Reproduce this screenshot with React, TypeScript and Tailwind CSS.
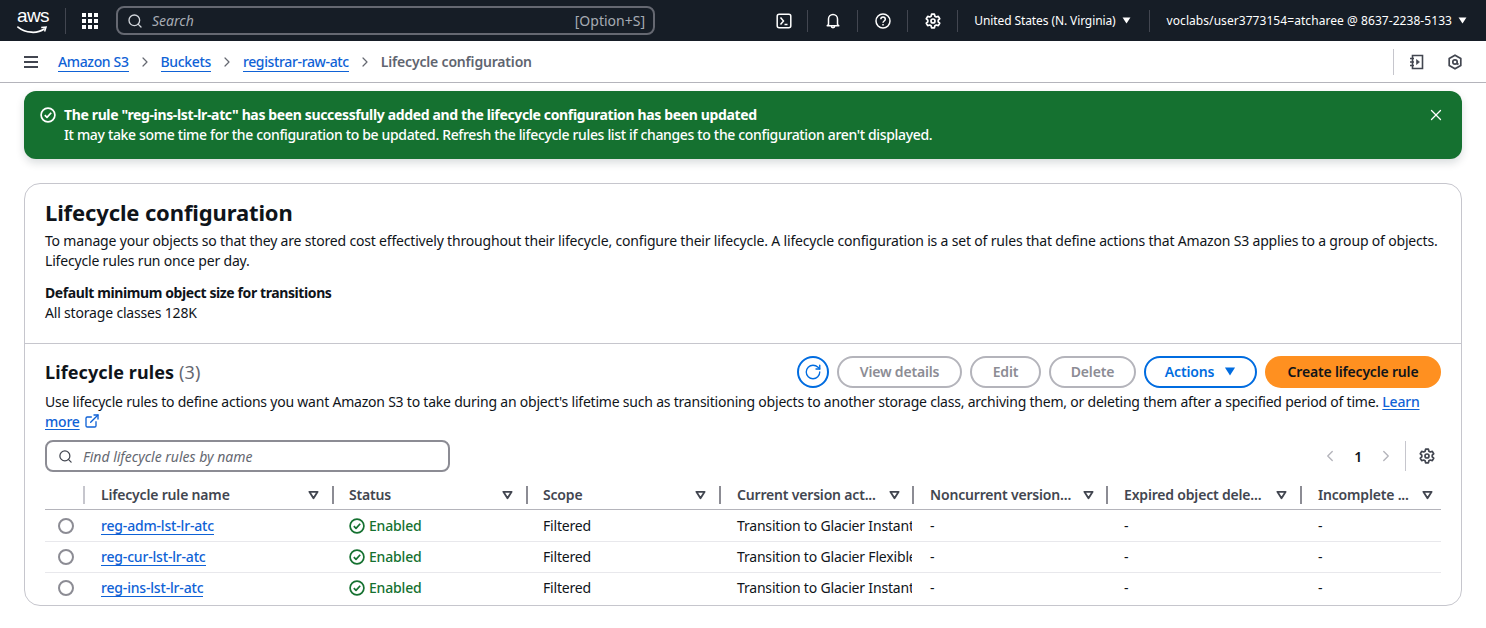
import { ChevronLeft, ChevronRight, ExternalLink, RotateCw, Search, X } from "lucide-react";

const font = "font-['Noto_Sans',sans-serif]";

function CaretDown({ className }: { className?: string }) {
  return (
    <svg viewBox="0 0 10 8" className={className} fill="currentColor">
      <path d="M0.5 0.5h9L5 7.5z" />
    </svg>
  );
}

function SortCaret() {
  return (
    <svg viewBox="0 0 12 10" className="w-[11px] h-[10px] text-[#424650] shrink-0" fill="none" stroke="currentColor" strokeWidth="2" strokeLinejoin="round">
      <path d="M1.5 1.5h9L6 8.5z" />
    </svg>
  );
}

function Gear({ className }: { className?: string }) {
  return (
    <svg viewBox="0 0 16 16" className={className} fill="none" stroke="currentColor" strokeWidth="1.7" strokeLinejoin="round">
      <path d="M6.6 1.2h2.8l.5 2 1.4.8 2-.6 1.4 2.4-1.5 1.4v1.6l1.5 1.4-1.4 2.4-2-.6-1.4.8-.5 2H6.6l-.5-2-1.4-.8-2 .6-1.4-2.4 1.5-1.4V7.2L1.3 5.8l1.4-2.4 2 .6 1.4-.8z" />
      <circle cx="8" cy="8" r="2" />
    </svg>
  );
}

function CheckCircle({ className }: { className?: string }) {
  return (
    <svg viewBox="0 0 16 16" className={className} fill="none" stroke="currentColor" strokeWidth="1.7">
      <circle cx="8" cy="8" r="6.9" />
      <path d="M4.8 8.2l2.2 2.2 4.2-4.6" strokeLinejoin="round" />
    </svg>
  );
}

function NavDivider() {
  return <div className="w-px h-[22px] bg-[#424650]" />;
}

function TopBar() {
  return (
    <header className="h-[41px] bg-[#161d26] flex items-center text-white pl-[17px] pr-[19px] tracking-normal">
      <div className="w-[31px] h-[28px] relative leading-none mr-[17px]">
        <span className="absolute left-[0px] top-[-1px] text-[19px] tracking-[-0.6px] font-['Liberation_Sans',sans-serif]">aws</span>
        <svg viewBox="0 0 32 10" className="absolute left-0 top-[18px] w-[31px] h-[10px]" fill="none">
          <path d="M1 2c8 6.500 20 7 27 2" stroke="#fff" strokeWidth="1.800" strokeLinecap="round" />
          <path d="M25 2.500l5-.5-1.500 4.500" stroke="#fff" strokeWidth="1.500" />
        </svg>
      </div>
      <div className="w-px h-[26px] bg-[#424650] mr-[16px]" />
      <div className="grid grid-cols-3 gap-[2px] w-[16px]">
        {Array.from({ length: 9 }).map((_, i) => (
          <div key={i} className="w-[4px] h-[4px] bg-white" />
        ))}
      </div>
      <div className="ml-[18px] w-[539px] h-[29px] rounded-[8px] border-2 border-[#656871] flex items-center pl-[9px] pr-[8px] gap-[9px] text-[#a6abb3] text-[14px] leading-none">
        <Search className="w-[16px] h-[16px] text-[#d1d5db]" strokeWidth={2} />
        <span className="italic flex-1">Search</span>
        <span>[Option+S]</span>
      </div>
      <div className="ml-auto flex items-center">
        <div className="w-[50px] pl-[3px] flex justify-center">
          <svg viewBox="0 0 16 16" className="w-[16px] h-[16px]" fill="none" stroke="currentColor" strokeWidth="1.5">
            <rect x="1.2" y="1.2" width="13.6" height="13.6" rx="2" />
            <path d="M4.5 4.5L7.5 8l-3 3.5M8.5 11.5h3" />
          </svg>
        </div>
        <NavDivider />
        <div className="w-[49px] flex justify-center">
          <svg viewBox="0 0 16 16" className="w-[16px] h-[16px]" fill="none" stroke="currentColor" strokeWidth="1.5" strokeLinejoin="round">
            <path d="M3.5 11.5V6a4.5 4.5 0 0 1 9 0v5.5l1.3 1.3H2.2zM8 1.5V1M6.3 13c0 2.2 3.4 2.2 3.4 0" />
          </svg>
        </div>
        <NavDivider />
        <div className="w-[49px] flex justify-center">
          <svg viewBox="0 0 16 16" className="w-[16px] h-[16px]" fill="none" stroke="currentColor" strokeWidth="1.5">
            <circle cx="8" cy="8" r="7" />
            <path d="M5.8 6.2c0-3 4.5-3 4.5 0 0 1.800-2.300 1.800-2.300 3.600M8 11v1.500" />
          </svg>
        </div>
        <NavDivider />
        <div className="w-[49px] flex justify-center">
          <Gear className="w-[16px] h-[16px]" />
        </div>
        <NavDivider />
        <div className="flex items-center gap-[6px] pl-[16px] pr-[18px] text-[12px] tracking-[-0.1px] leading-none">
          <span>United States (N. Virginia)</span>
          <CaretDown className="w-[9px] h-[7px]" />
        </div>
        <NavDivider />
        <div className="flex items-center gap-[6px] pl-[17px] text-[12px] tracking-[0.06px] leading-none">
          <span>voclabs/user3773154=atcharee @ 8637-2238-5133</span>
          <CaretDown className="w-[9px] h-[7px]" />
        </div>
      </div>
    </header>
  );
}

function Crumb({ label }: { label: string }) {
  return (
    <>
      <a className="text-[#0f62d6] text-[14px] leading-[18px] font-medium border-b border-[#0f62d6]">{label}</a>
      <ChevronRight className="w-[16px] h-[18px] text-[#656871] mx-[8px]" strokeWidth={1.8} />
    </>
  );
}

function Breadcrumbs() {
  return (
    <div className="h-[42px] border-b border-[#b4b4bb] flex items-center pl-[24px] pr-[23px] bg-white tracking-[-0.36px] pt-[1px]">
      <div className="w-[14px] mr-[20px] flex flex-col gap-[3px]">
        <div className="h-[2px] bg-[#424650]" />
        <div className="h-[2px] bg-[#424650]" />
        <div className="h-[2px] bg-[#424650]" />
      </div>
      <Crumb label="Amazon S3" />
      <Crumb label="Buckets" />
      <Crumb label="registrar-raw-atc" />
      <span className="text-[14px] leading-[18px] pb-[1px] font-semibold text-[#5f6570] tracking-[-0.18px]">Lifecycle configuration</span>
      <div className="ml-auto flex items-center h-[26px] border-l border-[#c6c6cd] pl-[15px] gap-[22px] text-[#424650]">
        <svg viewBox="0 0 16 16" className="w-[16px] h-[16px]" fill="none" stroke="currentColor" strokeWidth="1.6">
          <path d="M3.500 1.500h10v13h-10zM1 4.500h4M1 8h4M1 11.500h4" />
          <path d="M7.500 5.500l3 2.500-3 2.500z" fill="currentColor" strokeWidth="0.6" />
        </svg>
        <svg viewBox="0 0 16 16" className="w-[16px] h-[16px]" fill="none" stroke="currentColor" strokeWidth="1.7" strokeLinejoin="round">
          <path d="M8 1.200l5.800 3.400v6.800L8 14.800l-5.800-3.400V4.600z" />
          <circle cx="8" cy="8" r="2.200" />
          <path d="M10 9.500l1.500 1" />
        </svg>
      </div>
    </div>
  );
}

function Flash() {
  return (
    <div className="mx-[24px] mt-[8px] h-[68px] rounded-[12px] bg-[#157130] text-white text-[14px] leading-[20px] flex items-start pl-[16px] pr-[17px] pt-[14px] shadow-[0_4px_8px_rgba(0,28,36,0.15)]">
      <CheckCircle className="w-[16px] h-[16px] mt-[2px] mr-[8px] shrink-0" />
      <div className="flex-1">
        <div className="font-bold tracking-[-0.36px]">The rule "reg-ins-lst-lr-atc" has been successfully added and the lifecycle configuration has been updated</div>
        <div className="font-medium tracking-[-0.34px]">It may take some time for the configuration to be updated. Refresh the lifecycle rules list if changes to the configuration aren't displayed.</div>
      </div>
      <X className="w-[18px] h-[18px] mt-[1px]" strokeWidth={1.7} />
    </div>
  );
}

function DisabledButton({ label, width }: { label: string; width: string }) {
  return (
    <button className={`${width} h-[32px] rounded-full border-2 border-[#b4b4bb] text-[#8c8c94] text-[14px] font-semibold flex items-center justify-center pb-[1px]`}>
      {label}
    </button>
  );
}

const columns = [
  { label: "", width: "w-[38px]", pad: "" },
  { label: "Lifecycle rule name", width: "w-[249px]", pad: "pl-[18px] pr-[13px]" },
  { label: "Status", width: "w-[194px]", pad: "pl-[17px] pr-[13px]" },
  { label: "Scope", width: "w-[193px]", pad: "pl-[17px] pr-[13px]" },
  { label: "Current version act...", width: "w-[193px]", pad: "pl-[18px] pr-[12px]" },
  { label: "Noncurrent version...", width: "w-[194px]", pad: "pl-[18px] pr-[12px]" },
  { label: "Expired object dele...", width: "w-[194px]", pad: "pl-[18px] pr-[13px]" },
  { label: "Incomplete ...", width: "w-[141px]", pad: "pl-[18px] pr-[8px]" },
];

const rules = [
  { name: "reg-adm-lst-lr-atc", action: "Transition to Glacier Instant" },
  { name: "reg-cur-lst-lr-atc", action: "Transition to Glacier Flexible" },
  { name: "reg-ins-lst-lr-atc", action: "Transition to Glacier Instant" },
];

function RulesTable() {
  return (
    <div className="mt-[6px] text-[14px]">
      <div className="flex h-[32px] border-b border-[#b4b4bb] items-start">
        {columns.map((col, i) =>
          i === 0 ? (
            <div key={i} className={col.width} />
          ) : (
            <div key={i} className={`${col.width} ${col.pad} relative h-[21px] mt-[6px] flex items-center font-semibold text-[#424650] leading-none`}>
              <div className={`absolute left-0 top-[2px] h-[18px] w-[2px] ${i === 1 ? "bg-[#c6c6cd]" : "bg-[#8c8c94]"}`} />
              <span className="flex-1 whitespace-nowrap">{col.label}</span>
              <SortCaret />
            </div>
          )
        )}
      </div>
      {rules.map((rule, i) => (
        <div key={rule.name} className={`flex items-center text-[#0f141a] ${i === 0 ? "h-[32px] pt-[1px]" : "h-[31px]"} border-b ${i < 2 ? "border-[#e8e8ec]" : "border-transparent"}`}>
          <div className="w-[38px] flex justify-center pl-[3px]">
            <div className="w-[16px] h-[16px] rounded-full border-2 border-[#8c8c94]" />
          </div>
          <div className="w-[249px] pl-[18px] pb-[2px]">
            <a className="text-[#0f62d6] font-medium border-b border-[#0f62d6] leading-[16px] inline-block">{rule.name}</a>
          </div>
          <div className="w-[194px] pl-[17px] flex items-center gap-[4px] text-[#157130] font-medium">
            <CheckCircle className="w-[16px] h-[16px]" />
            <span className="pb-[2px]">Enabled</span>
          </div>
          <div className="w-[193px] pl-[17px] pb-[2px]">Filtered</div>
          <div className="w-[193px] pl-[18px] pb-[2px] overflow-hidden whitespace-nowrap">{rule.action}</div>
          <div className="w-[194px] pl-[18px] pb-[2px]">-</div>
          <div className="w-[194px] pl-[18px] pb-[2px]">-</div>
          <div className="w-[141px] pl-[18px] pb-[2px]">-</div>
        </div>
      ))}
    </div>
  );
}

export default function App() {
  return (
    <div className={`${font} w-[1486px] h-[628px] overflow-hidden bg-white text-[#0f141a] tracking-[-0.18px]`}>
      <TopBar />
      <Breadcrumbs />
      <Flash />
      <div className="mx-[24px] mt-[24px] h-[423px] rounded-[16px] border border-[#c6c6cd] bg-white">
        {/* Lifecycle configuration details */}
        <section className="h-[160px] border-b border-[#c6c6cd] px-[20px] pt-[13px]">
          <h1 className="text-[22px] leading-[30px] font-bold tracking-[-0.13px]">Lifecycle configuration</h1>
          <p className="mt-[4px] text-[14px] leading-[20px] font-normal">
            To manage your objects so that they are stored cost effectively throughout their lifecycle, configure their lifecycle. A lifecycle configuration is a set of rules that define actions that Amazon S3 applies to a group of objects. Lifecycle rules run once per day.
          </p>
          <p className="mt-[12px] text-[14px] leading-[20px] font-bold tracking-[-0.4px]">Default minimum object size for transitions</p>
          <p className="text-[14px] leading-[20px]">All storage classes 128K</p>
        </section>

        {/* Lifecycle rules */}
        <section className="px-[20px] pt-[12px]">
          <div className="flex items-center h-[32px]">
            <h2 className="text-[18px] font-bold leading-none tracking-[0.1px]">
              Lifecycle rules <span className="font-normal text-[#656871]">(3)</span>
            </h2>
            <div className="ml-auto flex items-center gap-[8px]">
              <button className="w-[32px] h-[32px] rounded-full border-2 border-[#006ce0] text-[#006ce0] flex items-center justify-center">
                <RotateCw className="w-[18px] h-[18px]" strokeWidth={1.8} />
              </button>
              <DisabledButton label="View details" width="w-[125px]" />
              <DisabledButton label="Edit" width="w-[71px]" />
              <DisabledButton label="Delete" width="w-[87px]" />
              <button className="w-[113px] h-[32px] rounded-full border-2 border-[#006ce0] text-[#006ce0] text-[14px] font-semibold flex items-center justify-center gap-[10px] pb-[1px]">
                Actions
                <CaretDown className="w-[12px] h-[9px]" />
              </button>
              <button className="w-[176px] h-[32px] rounded-full bg-[#ff9020] text-[#0f141a] text-[14px] font-semibold flex items-center justify-center pb-[1px]">
                Create lifecycle rule
              </button>
            </div>
          </div>
          <p className="mt-[4px] text-[14px] leading-[20px] tracking-[-0.215px]">
            Use lifecycle rules to define actions you want Amazon S3 to take during an object's lifetime such as transitioning objects to another storage class, archiving them, or deleting them after a specified period of time.{" "}
            <a className="text-[#0f62d6] font-medium underline underline-offset-2">Learn more</a>
            <ExternalLink className="inline w-[16px] h-[16px] ml-[4px] text-[#0f62d6] align-[-2px]" strokeWidth={2} />
          </p>
          <div className="flex items-center mt-[8px] h-[32px]">
            <div className="w-[405px] h-[32px] rounded-[8px] border-2 border-[#8c8c94] flex items-center pl-[11px] gap-[10px] text-[14px] tracking-normal">
              <Search className="w-[15px] h-[15px] text-[#424650]" strokeWidth={2} />
              <span className="italic text-[#656871]">Find lifecycle rules by name</span>
            </div>
            <div className="ml-auto flex items-center text-[#424650]">
              <ChevronLeft className="w-[18px] h-[20px] text-[#b4b4bb]" strokeWidth={1.8} />
              <span className="mx-[15px] text-[14px] font-semibold text-[#0f141a]">1</span>
              <ChevronRight className="w-[18px] h-[20px] text-[#b4b4bb]" strokeWidth={1.8} />
              <div className="w-px h-[30px] bg-[#c6c6cd] ml-[10px] mr-[13px]" />
              <Gear className="w-[16px] h-[16px] mr-[6px]" />
            </div>
          </div>
          <RulesTable />
        </section>
      </div>
    </div>
  );
}
